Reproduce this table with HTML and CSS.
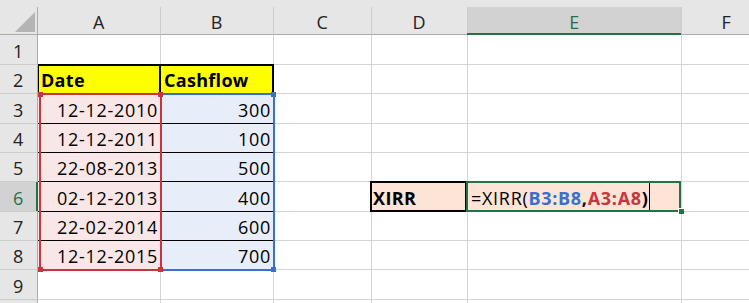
FILE: index.html
```html
<!DOCTYPE html>
<html lang="en">
<head>
  <meta charset="UTF-8">
  <title>XIRR</title>
  <link rel="stylesheet" href="styles.css">
</head>
<body>
  <div class="sheet">
    <!-- column headers -->
    <div class="row">
      <div class="cell head corner"><span class="tri"></span></div>
      <div class="cell head col-head">A</div>
      <div class="cell head col-head">B</div>
      <div class="cell head col-head">C</div>
      <div class="cell head col-head">D</div>
      <div class="cell head col-head sel">E</div>
      <div class="cell head col-head">F</div>
    </div>

    <div class="row">
      <div class="cell head row-head">1</div>
      <div class="cell"></div><div class="cell"></div><div class="cell"></div>
      <div class="cell"></div><div class="cell"></div><div class="cell"></div>
    </div>

    <div class="row">
      <div class="cell head row-head">2</div>
      <div class="cell title">Date</div>
      <div class="cell title title-last">Cashflow</div>
      <div class="cell"></div><div class="cell"></div><div class="cell"></div><div class="cell"></div>
    </div>

    <div class="row">
      <div class="cell head row-head">3</div>
      <div class="cell date">12-12-2010</div>
      <div class="cell amount">300</div>
      <div class="cell"></div><div class="cell"></div><div class="cell"></div><div class="cell"></div>
    </div>

    <div class="row">
      <div class="cell head row-head">4</div>
      <div class="cell date">12-12-2011</div>
      <div class="cell amount">100</div>
      <div class="cell"></div><div class="cell"></div><div class="cell"></div><div class="cell"></div>
    </div>

    <div class="row">
      <div class="cell head row-head">5</div>
      <div class="cell date">22-08-2013</div>
      <div class="cell amount">500</div>
      <div class="cell"></div><div class="cell"></div><div class="cell"></div><div class="cell"></div>
    </div>

    <div class="row">
      <div class="cell head row-head sel">6</div>
      <div class="cell date">02-12-2013</div>
      <div class="cell amount">400</div>
      <div class="cell"></div>
      <div class="cell label">XIRR</div>
      <div class="cell active">
        <span class="formula">=XIRR(<b class="ref-b">B3:B8</b><b>,</b><b class="ref-a">A3:A8</b><b>)</b></span>
        <span class="caret"></span>
        <span class="handle"></span>
      </div>
      <div class="cell"></div>
    </div>

    <div class="row">
      <div class="cell head row-head">7</div>
      <div class="cell date">22-02-2014</div>
      <div class="cell amount">600</div>
      <div class="cell"></div><div class="cell"></div><div class="cell"></div><div class="cell"></div>
    </div>

    <div class="row">
      <div class="cell head row-head">8</div>
      <div class="cell date">12-12-2015</div>
      <div class="cell amount">700</div>
      <div class="cell"></div><div class="cell"></div><div class="cell"></div><div class="cell"></div>
    </div>

    <div class="row">
      <div class="cell head row-head">9</div>
      <div class="cell"></div><div class="cell"></div><div class="cell"></div>
      <div class="cell"></div><div class="cell"></div><div class="cell"></div>
    </div>

    <!-- next row only peeks in at the bottom edge -->
    <div class="row">
      <div class="cell head row-head"></div>
      <div class="cell"></div><div class="cell"></div><div class="cell"></div>
      <div class="cell"></div><div class="cell"></div><div class="cell"></div>
    </div>

    <!-- range highlights drawn while the formula is being edited -->
    <div class="range range-b"><i class="knob tr"></i><i class="knob br"></i></div>
    <div class="range range-a"><i class="knob tl"></i><i class="knob tr"></i><i class="knob bl"></i><i class="knob br"></i></div>
  </div>
</body>
</html>
```

FILE: styles.css
```css
body {
  margin: 0;
  background: #e6e6e6;
  font-family: "Open Sans", "Liberation Sans", sans-serif;
  overflow: hidden;
}
.sheet {
  position: relative;
  display: grid;
  grid-template-columns: 38px 123px 113px 98px 96px 214px 90px;
  grid-template-rows: 28px 30px 29px 30px 29px 29px 30px 29px 29px 30px 29px;
  padding-top: 7px;
  width: max-content;
  font-size: 18px;
  letter-spacing: 0.7px;
}
.row {
  display: contents;
}
.cell {
  position: relative;
  box-sizing: border-box;
  display: flex;
  align-items: flex-end;
  padding: 0 3px 3px;
  line-height: 20px;
  white-space: nowrap;
  background: #fff;
  color: #000;
  border-right: 1px solid #d4d4d4;
  border-bottom: 1px solid #d4d4d4;
}

/* headers */
.head {
  z-index: 3;
  justify-content: center;
  background: #e6e6e6;
  color: #222;
  border-color: #cdcdcd;
}
.col-head {
  padding-bottom: 2px;
  border-bottom-color: #ababab;
}
.row-head {
  padding: 0 0 3px;
  border-right-color: #ababab;
}
.corner {
  justify-content: flex-end;
  padding: 0 2px 2px 0;
  border-bottom-color: #ababab;
  border-right-color: #ababab;
}
.tri {
  width: 20px;
  height: 20px;
  background: #b4b4b4;
  clip-path: polygon(100% 0, 100% 100%, 0 100%);
}
.head.sel {
  background: #d2d2d2;
  color: #217346;
}
.col-head.sel::after {
  content: "";
  position: absolute;
  left: -1px;
  right: 0;
  bottom: -1px;
  height: 2px;
  background: #217346;
}
.row-head.sel::after {
  content: "";
  position: absolute;
  top: 0;
  bottom: 0;
  right: -1px;
  width: 2px;
  background: #217346;
}

/* data */
.title {
  font-weight: bold;
  letter-spacing: 0.3px;
  background: #ffff00;
}
.title::before {
  content: "";
  position: absolute;
  top: -1px;
  left: 0;
  right: -1px;
  bottom: 0;
  border-top: 2px solid #000;
  border-left: 1px solid #000;
  border-right: 2px solid #000;
}
.title-last::before {
  left: -1px;
  border-left: none;
}
.date, .amount {
  justify-content: flex-end;
  padding-right: 2px;
  border-bottom-color: #000;
}
.date {
  background: #f9e7e7;
}
.amount {
  background: #e8eef9;
}
.label, .active {
  background: #fce4d6;
}
.label {
  font-weight: bold;
  letter-spacing: 0.4px;
  padding-left: 1px;
}
.label::before, .active::before {
  content: "";
  position: absolute;
  top: -1px;
  left: -2px;
  right: 0;
  bottom: -1px;
  border: 2px solid #000;
}
.active {
  z-index: 1;
}
.active::before {
  border-color: #217346;
}
.ref-a { color: #c8353d; }
.ref-b { color: #3a6fcb; }
.caret {
  align-self: stretch;
  width: 1px;
  margin: 1px 0 -2px 0;
  background: #000;
}
.handle {
  position: absolute;
  right: -3px;
  bottom: -3px;
  width: 5px;
  height: 5px;
  background: #217346;
  border-left: 1px solid #fff;
  border-top: 1px solid #fff;
}

/* reference highlights */
.range {
  position: absolute;
  z-index: 2;
  top: 93px;
  height: 178px;
  box-sizing: border-box;
  border: 2px solid;
  pointer-events: none;
}
.range-a {
  left: 39px;
  width: 123px;
  border-color: #c8353d;
}
.range-b {
  left: 160px;
  width: 115px;
  border-color: #3a6fcb;
}
.knob {
  position: absolute;
  width: 5px;
  height: 5px;
}
.range-a .knob { background: #c8353d; }
.range-b .knob { background: #3a6fcb; }
.knob.tl { left: -3px; top: -3px; }
.knob.tr { right: -3px; top: -3px; }
.knob.bl { left: -3px; bottom: -3px; }
.knob.br { right: -3px; bottom: -3px; }
```
